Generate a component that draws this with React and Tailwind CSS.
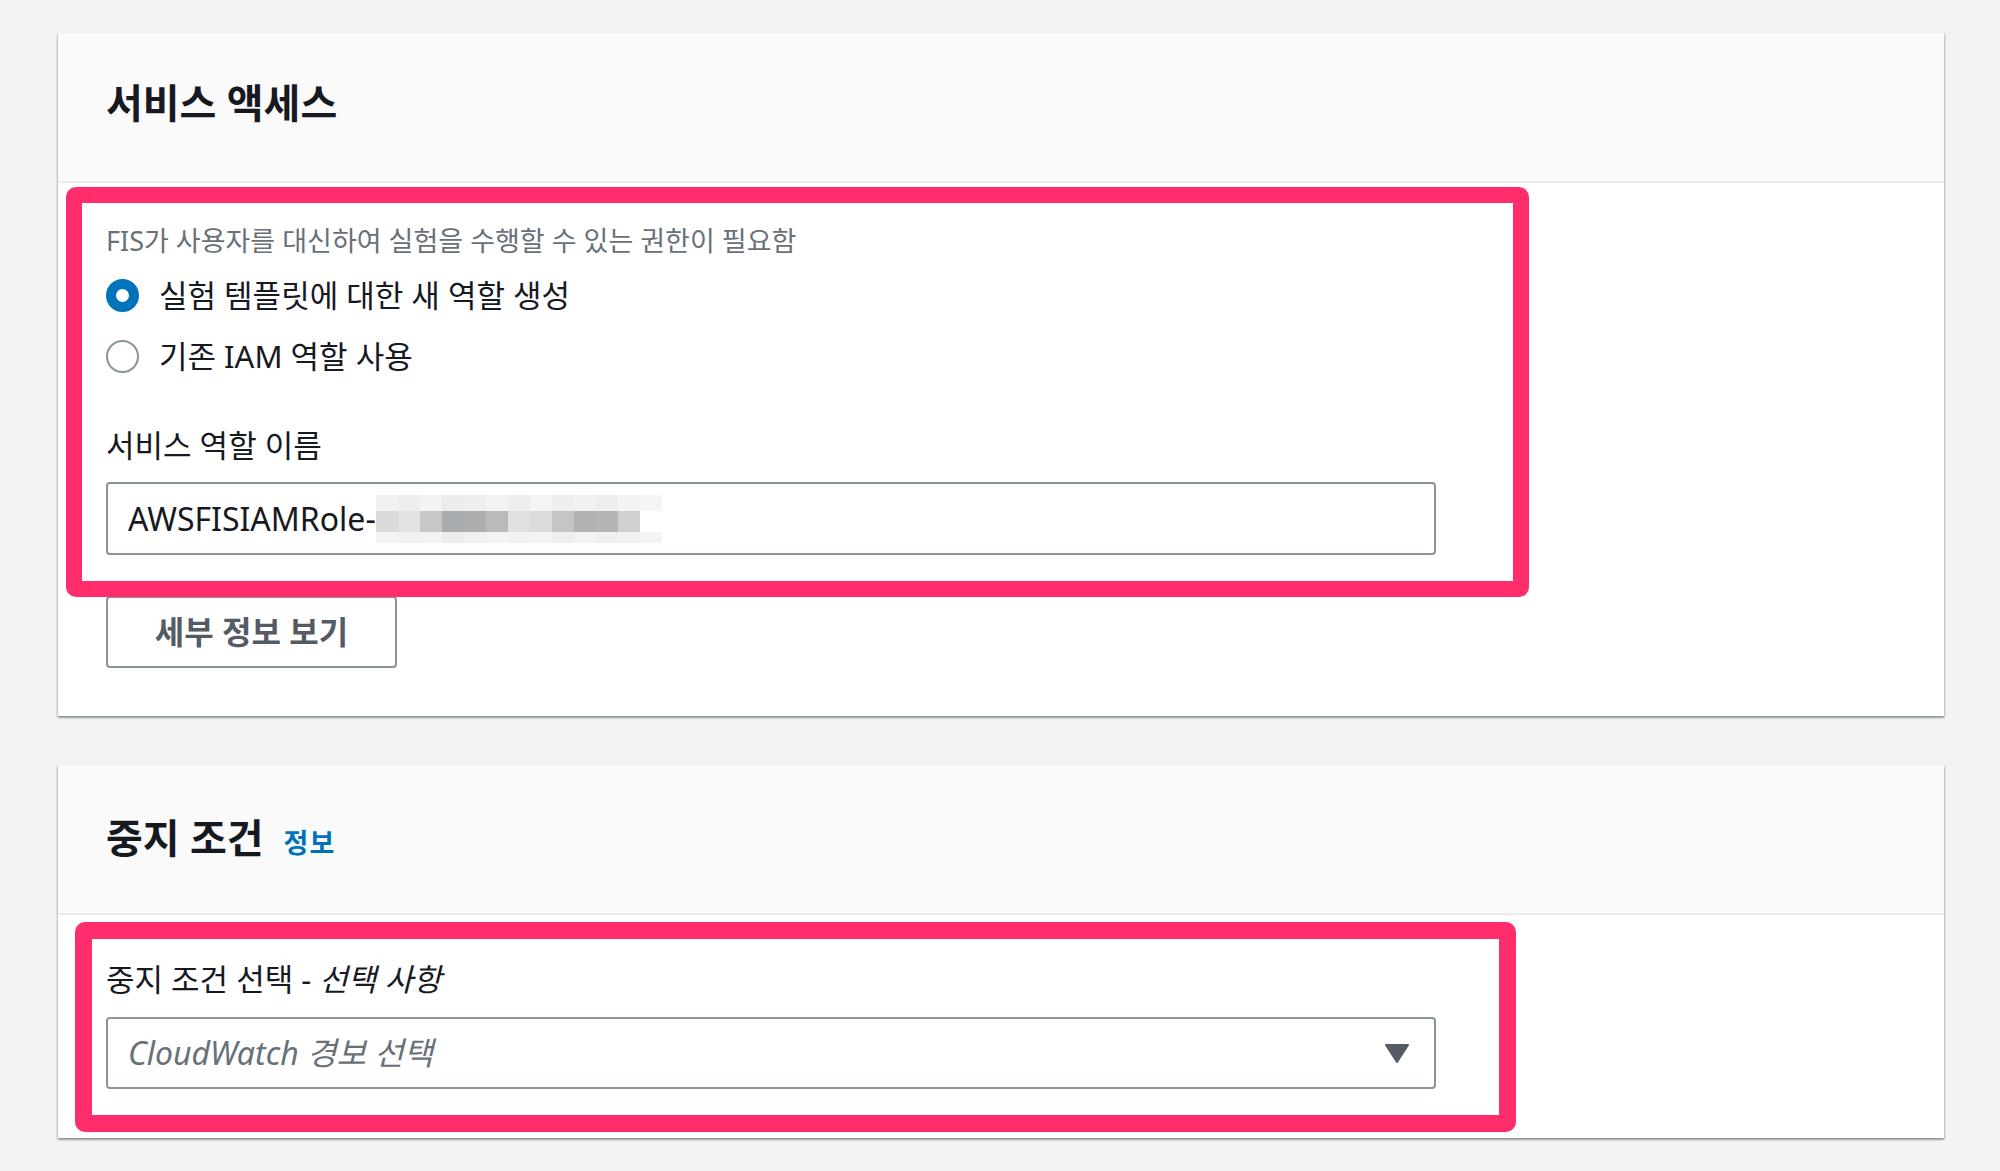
import React from "react";

const FONT = "font-['Noto_Sans','Noto_Sans_CJK_KR',sans-serif]";

const mosaicTop = [
  "bg-[#f1f1f1]", "bg-[#eeeeee]", "bg-[#f3f3f3]", "bg-[#ececec]", "bg-[#efefef]", "bg-[#f2f2f2]",
  "bg-[#eeeeee]", "bg-[#f4f4f4]", "bg-[#efefef]", "bg-[#f1f1f1]", "bg-[#eeeeee]", "bg-[#f3f3f3]", "bg-[#f5f5f5]",
];
const mosaicMid = [
  "bg-[#dadada]", "bg-[#e2e2e2]", "bg-[#c6c7c8]", "bg-[#a9acae]", "bg-[#acaeb0]", "bg-[#b9babb]",
  "bg-[#e0e0e0]", "bg-[#dcdcdc]", "bg-[#c4c5c6]", "bg-[#b0b2b3]", "bg-[#b3b4b5]", "bg-[#cfd0d0]", "bg-white",
];
const mosaicBot = [
  "bg-[#f3f3f3]", "bg-[#f0f0f0]", "bg-[#f2f2f2]", "bg-[#ededed]", "bg-[#f0f0f0]", "bg-[#f3f3f3]",
  "bg-[#f1f1f1]", "bg-[#f4f4f4]", "bg-[#eeeeee]", "bg-[#f2f2f2]", "bg-[#efefef]", "bg-[#f1f1f1]", "bg-[#f4f4f4]",
];

function Mosaic() {
  return (
    <div className="flex flex-col w-[286px] h-[48px] shrink-0">
      <div className="flex h-[16px]">
        {mosaicTop.map((c, i) => (
          <div key={i} className={"w-[22px] h-full " + c} />
        ))}
      </div>
      <div className="flex h-[21px]">
        {mosaicMid.map((c, i) => (
          <div key={i} className={"w-[22px] h-full " + c} />
        ))}
      </div>
      <div className="flex h-[11px]">
        {mosaicBot.map((c, i) => (
          <div key={i} className={"w-[22px] h-full " + c} />
        ))}
      </div>
    </div>
  );
}

function Card({ header, children, redBox }) {
  return (
    <div className="relative w-[1886px] bg-white shadow-[0_2px_2px_0_rgba(0,28,36,0.3),1px_1px_2px_0_rgba(0,28,36,0.15),-1px_1px_2px_0_rgba(0,28,36,0.15)]">
      <div className="h-[150px] bg-[#fafafa] border-b-2 border-[#eaeded] flex items-center pl-[48px]">
        {header}
      </div>
      <div className="pl-[48px]">{children}</div>
      {redBox}
    </div>
  );
}

export default function App() {
  return (
    <div className={"min-h-[1171px] w-[2000px] bg-[#f2f3f3] pt-[33px] pl-[58px] flex flex-col gap-[49px] " + FONT}>
      <Card
        header={
          <h2 className="text-[40px] font-bold text-[#16191f] leading-none mt-[-8px]">
            서비스 액세스
          </h2>
        }
        redBox={
          <div className="absolute left-[8px] top-[154px] w-[1463px] h-[410px] border-[16px] border-[#ff2d6b] rounded-[10px] pointer-events-none" />
        }
      >
        <div className="pt-[42px] pb-[48px] flex flex-col">
          <div className="h-[32px] flex items-center text-[27px] text-[#687078]">
            FIS가 사용자를 대신하여 실험을 수행할 수 있는 권한이 필요함
          </div>
          <div className="mt-[18px] h-[40px] flex items-center gap-[20px]">
            <div className="w-[33px] h-[33px] rounded-full border-[10px] border-[#0073bb] bg-white shrink-0" />
            <span className="text-[31px] text-[#16191f]">실험 템플릿에 대한 새 역할 생성</span>
          </div>
          <div className="mt-[21px] h-[40px] flex items-center gap-[20px]">
            <div className="w-[33px] h-[33px] rounded-full border-2 border-[#879596] bg-white shrink-0" />
            <span className="text-[31px] text-[#16191f]">기존 IAM 역할 사용</span>
          </div>
          <div className="mt-[49px] h-[40px] flex items-center text-[31px] text-[#16191f]">
            서비스 역할 이름
          </div>
          <div className="mt-[17px] w-[1330px] h-[73px] border-2 border-[#879596] rounded-[4px] flex items-center pl-[20px]">
            <span className="text-[32px] text-[#16191f]">AWSFISIAMRole-</span>
            <Mosaic />
          </div>
          <div className="mt-[41px] w-[291px] h-[72px] border-2 border-[#879596] rounded-[4px] flex items-center justify-center">
            <span className="text-[32px] font-bold text-[#545b64]">세부 정보 보기</span>
          </div>
        </div>
      </Card>

      <Card
        header={
          <div className="flex items-baseline gap-[20px] mt-[-2px]">
            <h2 className="text-[40px] font-bold text-[#16191f] leading-none">중지 조건</h2>
            <span className="text-[27px] font-bold text-[#0073bb] leading-none tracking-[1px]">정보</span>
          </div>
        }
        redBox={
          <div className="absolute left-[17px] top-[157px] w-[1441px] h-[210px] border-[17px] border-[#ff2d6b] rounded-[10px] pointer-events-none" />
        }
      >
        <div className="pt-[44px] pb-[49px] flex flex-col">
          <div className="h-[40px] flex items-center text-[31px] text-[#16191f]">
            중지 조건 선택 -&nbsp;<span className="italic">선택 사항</span>
          </div>
          <div className="mt-[18px] w-[1330px] h-[72px] border-2 border-[#879596] rounded-[4px] flex items-center pl-[20px] pr-[25px] justify-between">
            <span className="text-[32px] italic text-[#687078]">CloudWatch 경보 선택</span>
            <svg width="24" height="19" viewBox="0 0 24 19">
              <path d="M1 1 L23 1 L12 18 Z" fill="#545b64" stroke="#545b64" strokeWidth="2" strokeLinejoin="round" />
            </svg>
          </div>
        </div>
      </Card>
    </div>
  );
}
